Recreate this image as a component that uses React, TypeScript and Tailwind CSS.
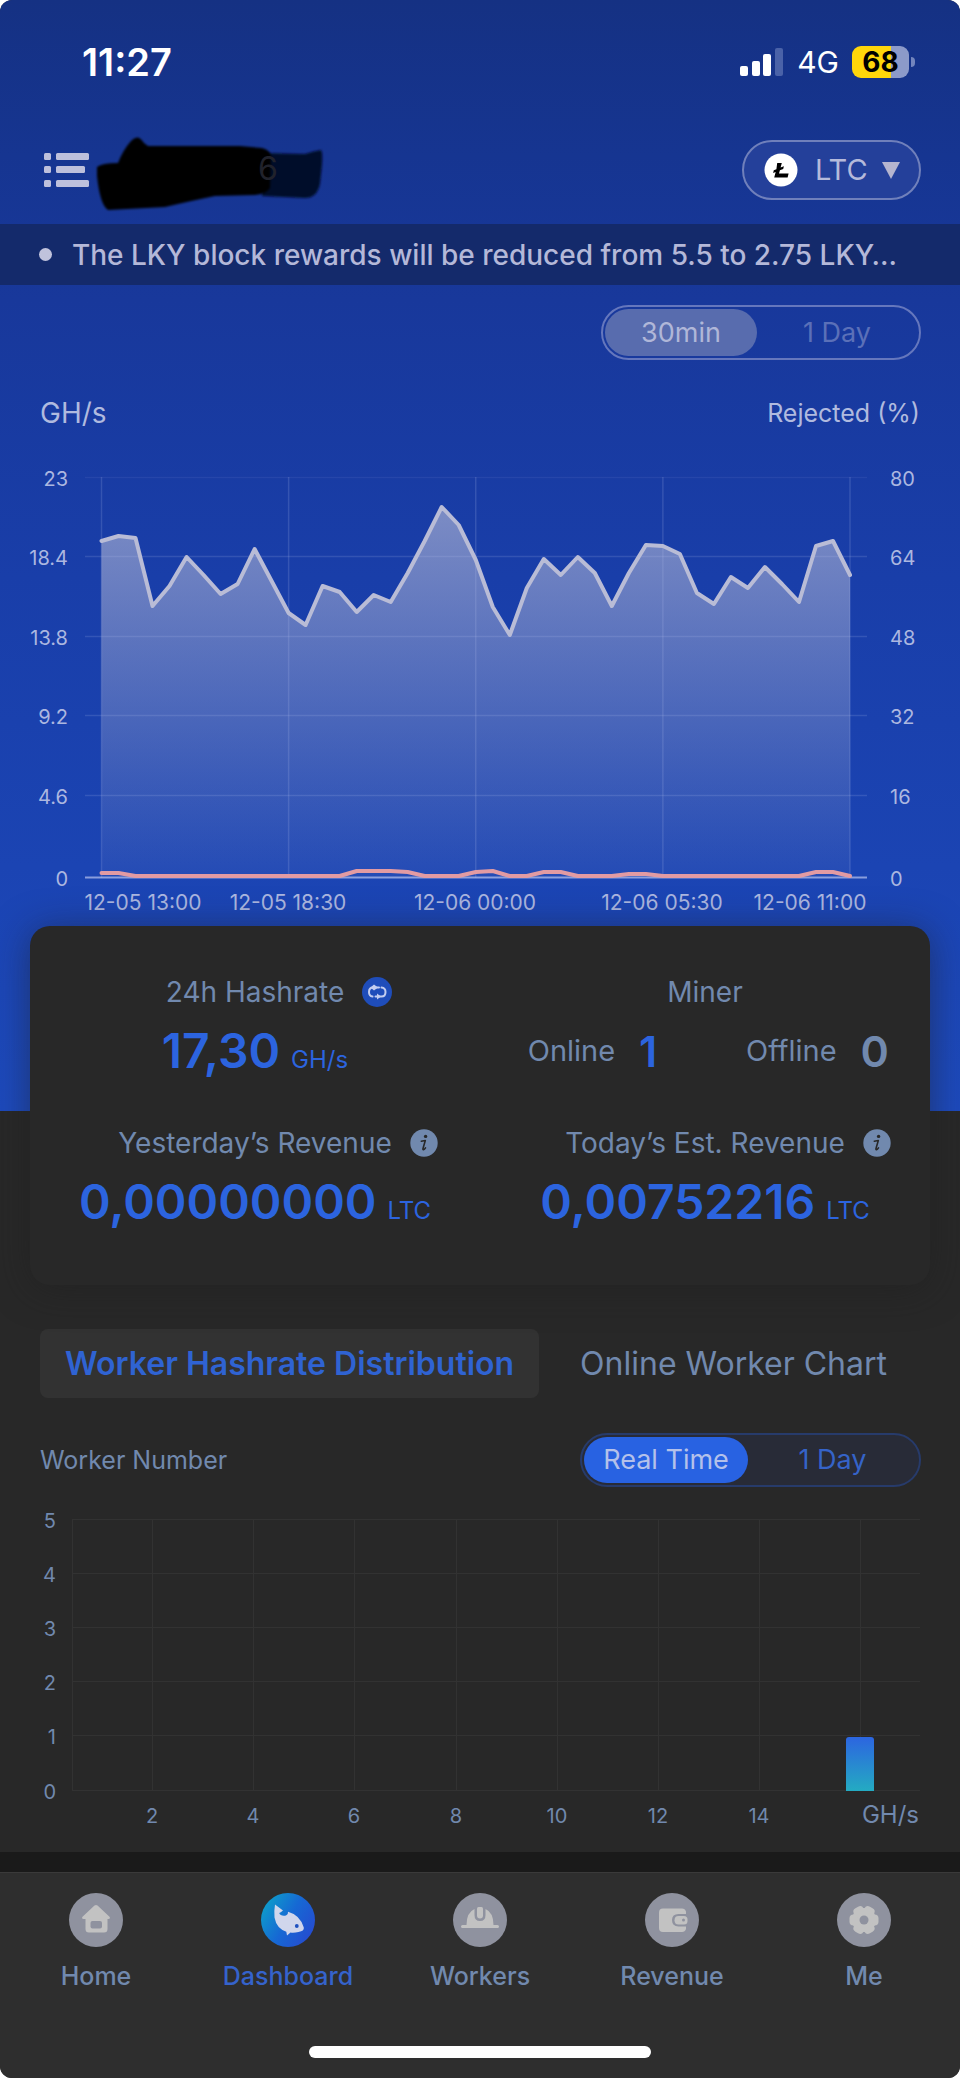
import React from "react";

const hashrate = [
  541, 536, 538, 606, 586, 557, 575, 594, 584, 549, 581, 613, 625, 586, 592, 612, 595, 602, 573, 541, 507, 525, 560, 607,
  635, 588, 559, 575, 557, 573, 606, 573, 545, 546, 554, 593, 604, 577, 588, 567, 584, 602, 546, 541, 575,
];
const rejectedBumps: Record<number, number> = {
  0: 873, 1: 873, 15: 871, 16: 871, 17: 871, 18: 872, 22: 872, 23: 871, 26: 872, 27: 872, 31: 874, 32: 874, 42: 872, 43: 872,
};
const rejected = hashrate.map((_, i) => rejectedBumps[i] ?? 876);
const STEP = 748.5 / 44;
const toPoints = (ys: number[]) => ys.map((y, i) => `${(101.5 + i * STEP).toFixed(1)},${y}`).join(" ");

function StatusBar() {
  return (
    <div className="flex h-[124px] items-center justify-between pr-[45px] pl-[82px] text-white">
      <span className="text-[38px] leading-[44px] font-semibold">11:27</span>
      <div className="flex items-center gap-[13px]">
        <svg className="h-[30px] w-[44px]" viewBox="0 0 44 30" aria-hidden="true">
          <rect x="0" y="19" width="8" height="10" rx="2" fill="#fff" />
          <rect x="12" y="14" width="8" height="15" rx="2" fill="#fff" />
          <rect x="23" y="7" width="8" height="22" rx="2" fill="#fff" />
          <rect x="35" y="1" width="8" height="28" rx="2" fill="#4a62a8" />
        </svg>
        <span className="text-[30px] leading-[36px]">4G</span>
        <div className="flex items-center gap-[2px]">
          <div className="flex h-[32px] w-[57px] items-center justify-center rounded-[9px] bg-[linear-gradient(90deg,#ffd60a_68%,#8c9ac9_68%)] text-[28px] leading-[32px] font-bold text-black">
            68
          </div>
          <div className="h-[10px] w-[4px] rounded-r-full bg-[#7385bd]" />
        </div>
      </div>
    </div>
  );
}

function Header() {
  return (
    <header className="mt-[6px] flex h-[80px] items-center justify-between pr-[39px] pl-[44px]">
      <div className="flex items-center gap-[4px]">
        <button aria-label="Menu">
          <svg className="h-[34px] w-[46px]" viewBox="0 0 46 34" fill="#bdc0dc" aria-hidden="true">
            <rect x="0" y="0" width="7" height="7" rx="1.5" />
            <rect x="12" y="0" width="33" height="7" rx="1.5" />
            <rect x="0" y="13" width="7" height="7" rx="1.5" />
            <rect x="12" y="13" width="29" height="7" rx="1.5" />
            <rect x="0" y="27" width="7" height="7" rx="1.5" />
            <rect x="12" y="27" width="33" height="7" rx="1.5" />
          </svg>
        </button>
        <div className="relative h-[80px] w-[232px]">
          <svg className="h-[80px] w-[232px] overflow-visible" viewBox="94 130 232 80" aria-hidden="true">
            <defs>
              <filter id="soft" x="-10%" y="-20%" width="120%" height="140%">
                <feGaussianBlur stdDeviation="1.3" />
              </filter>
            </defs>
            <path d="M262 153L305 154Q314 151 321 150Q323 152 322 165L320 184Q317 198 305 198L262 196Z" fill="#030d2b" filter="url(#soft)" />
            <path d="M97 167Q102 163 118 163Q123 150 131 141Q138 133 144 143L148 146L240 146L262 148Q270 150 271 156L270 188Q266 194 255 195L215 196Q195 200 165 207L108 210Q100 205 97 176Z" fill="#000" filter="url(#soft)" />
          </svg>
          <span className="absolute top-[21px] left-[164px] text-[32px] leading-[36px] text-[#20222b]">6</span>
        </div>
      </div>
      <button className="flex h-[60px] w-[179px] items-center rounded-full border-2 border-[#7080bb] bg-[#24409a] pl-[20px] text-[29px] leading-[36px] text-[#b5badb]">
        <svg className="h-[34px] w-[34px]" viewBox="0 0 34 34" aria-hidden="true">
          <circle cx="17" cy="17" r="16.5" fill="#fff" />
          <path d="M13.2 10h4.6l-1.2 4.6 3.3-1.3-.7 2.6-3.3 1.3-.9 3.3h9.6l-1 4.1H10.200l1.500-5.700-2.600 1 .7-2.600 2.600-1z" fill="#000" />
        </svg>
        <span className="ml-[17px]">LTC</span>
        <svg className="ml-[14px] h-[18px] w-[18px]" viewBox="0 0 18 18" aria-hidden="true">
          <path d="M0 1h18L9 18z" fill="#b5b5cf" />
        </svg>
      </button>
    </header>
  );
}

const xTicks: [number, string][] = [
  [143, "12-05 13:00"],
  [288, "12-05 18:30"],
  [475, "12-06 00:00"],
  [662, "12-06 05:30"],
  [810, "12-06 11:00"],
];
const yRows: [number, string, string][] = [
  [478, "23", "80"],
  [557, "18.4", "64"],
  [637, "13.8", "48"],
  [716, "9.2", "32"],
  [796, "4.6", "16"],
  [878, "0", "0"],
];

function HashrateChart() {
  return (
    <svg className="mt-[20px] block h-auto w-full" viewBox="0 450 960 476" role="img" aria-label="Hashrate and rejected rate">
      <defs>
        <linearGradient id="area" gradientUnits="userSpaceOnUse" x1="0" y1="507" x2="0" y2="878">
          <stop offset="0" stopColor="#b4b9d6" stopOpacity="0.64" />
          <stop offset="1" stopColor="#b4b9d6" stopOpacity="0.06" />
        </linearGradient>
      </defs>
      <polygon points={`101.5,878 ${toPoints(hashrate)} 850,878`} fill="url(#area)" />
      {yRows.map(([y], i) => (
        <line key={y} x1="85" x2="867" y1={y - 0.5} y2={y - 0.5} stroke="#b9c3ee" strokeOpacity={i === 0 ? 0.08 : i === 5 ? 0.7 : 0.17} strokeWidth={i === 5 ? 2 : 1.5} />
      ))}
      {[0, 11, 22, 33, 44].map((i) => (
        <line key={i} x1={101.5 + i * STEP} x2={101.5 + i * STEP} y1="477" y2="878" stroke="#b9c3ee" strokeOpacity="0.18" strokeWidth="1.5" />
      ))}
      <polyline points={toPoints(hashrate)} fill="none" stroke="#b9bcd6" strokeWidth="4" strokeLinejoin="round" strokeLinecap="round" />
      <polyline points={toPoints(rejected)} fill="none" stroke="#e29ba3" strokeWidth="4" strokeLinejoin="round" strokeLinecap="round" />
      <g fill="#acb7e0" fontSize="20">
        {yRows.map(([y, left, right]) => (
          <React.Fragment key={y}>
            <text x="68" y={y + 8} textAnchor="end">{left}</text>
            <text x="890" y={y + 8}>{right}</text>
          </React.Fragment>
        ))}
        {xTicks.map(([x, label]) => (
          <text key={label} x={x} y="910" textAnchor="middle" fontSize="21">{label}</text>
        ))}
      </g>
    </svg>
  );
}

function InfoIcon() {
  return (
    <svg className="h-[28px] w-[28px]" viewBox="0 0 28 28" aria-hidden="true">
      <circle cx="14" cy="14" r="13.700" fill="#7189ae" />
      <circle cx="15.600" cy="7.400" r="1.700" fill="#282828" />
      <path d="M11.300 12.200l4-.7-2.300 8q-.3 1.400.5 1.200 1-.3 2-1.800" fill="none" stroke="#282828" strokeWidth="1.600" strokeLinecap="round" strokeLinejoin="round" />
    </svg>
  );
}

function SyncIcon() {
  return (
    <svg className="h-[30px] w-[30px]" viewBox="0 0 30 30" aria-hidden="true">
      <circle cx="15" cy="15" r="15" fill="#1f4dba" />
      <g fill="none" stroke="#c3cdf0" strokeWidth="2" strokeLinecap="round" strokeLinejoin="round">
        <path d="M10.500 19.500Q7 19 7 15Q7 10.500 11 10.500H12.500" />
        <path d="M19.500 10.500Q23.500 11 23.500 15Q23.500 19.500 19.500 19.500H18" />
        <path d="M13 10.500H17M13.500 19.500H17" />
      </g>
      <path d="M12 7.500v6l-3.500-3zM12 7.500l4 3-4 3zM15 16.500v6l4-3z" fill="#c3cdf0" />
    </svg>
  );
}

function StatLabel({ children, icon }: { children: React.ReactNode; icon?: React.ReactNode }) {
  return (
    <div className="grid h-[32px] grid-cols-[1fr_auto_1fr] items-center gap-x-[18px] text-[28px] leading-[32px] text-[#7189ae]">
      <span className="col-start-2 whitespace-nowrap">{children}</span>
      {icon}
    </div>
  );
}

function StatValue({ value, unit }: { value: string; unit: string }) {
  return (
    <div className="mt-[15px] flex h-[56px] items-baseline justify-center gap-[11px] leading-[56px] text-[#2c64df]">
      <span className="text-[48px] font-semibold">{value}</span>
      <span className="text-[24px]">{unit}</span>
    </div>
  );
}

function Summary() {
  return (
    <section className="relative mx-[30px] -mt-[185px] grid grid-cols-2 gap-y-[48px] rounded-[20px] bg-[#282828] pt-[50px] pb-[55px] shadow-[0_4px_36px_rgba(30,30,30,0.5)]">
      <div>
        <StatLabel icon={<SyncIcon />}>24h Hashrate</StatLabel>
        <StatValue value="17,30" unit="GH/s" />
      </div>
      <div>
        <StatLabel>Miner</StatLabel>
        <div className="mt-[15px] grid h-[56px] grid-cols-2 text-[29px] leading-[56px] text-[#7189ae]">
          <div className="flex items-center justify-center gap-[24px]">
            Online <span className="text-[43px] font-semibold text-[#2c64df]">1</span>
          </div>
          <div className="flex items-center justify-center gap-[24px]">
            Offline <span className="text-[43px] font-semibold">0</span>
          </div>
        </div>
      </div>
      <div>
        <StatLabel icon={<InfoIcon />}>Yesterday’s Revenue</StatLabel>
        <StatValue value="0,00000000" unit="LTC" />
      </div>
      <div>
        <StatLabel icon={<InfoIcon />}>Today’s Est. Revenue</StatLabel>
        <StatValue value="0,00752216" unit="LTC" />
      </div>
    </section>
  );
}

function WorkerChart() {
  const rows = [1520, 1574, 1628, 1682, 1736, 1791];
  const cols = [72, 152, 253, 354, 456, 557, 658, 759, 860];
  return (
    <svg className="mt-[13px] block h-auto w-full" viewBox="0 1500 960 352" role="img" aria-label="Worker hashrate distribution">
      <defs>
        <linearGradient id="bar" x1="0" y1="0" x2="0" y2="1">
          <stop offset="0" stopColor="#2c65e0" />
          <stop offset="1" stopColor="#24abc2" />
        </linearGradient>
      </defs>
      <g stroke="#323232" strokeWidth="1">
        {rows.map((y) => <line key={y} x1="72" x2="920" y1={y - 0.5} y2={y - 0.5} />)}
        {cols.map((x) => <line key={x} x1={x + 0.5} x2={x + 0.5} y1="1519" y2="1791" />)}
      </g>
      <path d="M846 1791V1740q0-3 3-3h22q3 0 3 3V1791z" fill="url(#bar)" />
      <g fill="#7189ae" fontSize="20">
        {rows.map((y, i) => <text key={y} x="56" y={y + 8} textAnchor="end">{5 - i}</text>)}
        {cols.slice(1, 8).map((x, i) => <text key={x} x={x} y="1823" textAnchor="middle">{(i + 1) * 2}</text>)}
        <text x="919" y="1823" textAnchor="end" fontSize="24">GH/s</text>
      </g>
    </svg>
  );
}

const glyph = "#c2c2c2";
const disc = "#8f929f";

function HomeIcon() {
  return (
    <svg className="h-[54px] w-[54px]" viewBox="0 0 54 54" aria-hidden="true">
      <circle cx="27" cy="27" r="27" fill={disc} />
      <path d="M25.500 12.600q1.500-1 3 0l12 11.200q1.200 1.700-1 2.200H38.500v10q0 3.500-3.500 3.500H20q-3.500 0-3.500-3.500V26h-2q-2.200-.5-1-2.200z" fill={glyph} />
      <rect x="21.500" y="28" width="11.500" height="7.500" rx="2" fill={disc} />
    </svg>
  );
}

function FishIcon() {
  return (
    <svg className="h-[54px] w-[54px]" viewBox="0 0 54 54" aria-hidden="true">
      <defs>
        <linearGradient id="sea" x1="0" y1="0.2" x2="1" y2="0.800">
          <stop offset="0" stopColor="#0da0c9" />
          <stop offset="0.500" stopColor="#1668d4" />
          <stop offset="1" stopColor="#2749cf" />
        </linearGradient>
      </defs>
      <circle cx="27" cy="27" r="27" fill="url(#sea)" />
      <path d="M14 11.500L22 17.500Q19.500 19.500 18.200 20Q19.500 23.500 25 22.500Q27.500 21 27 18.800Q39 22 42.800 34.500Q43.500 38 37.500 39Q33 40.200 29.500 39.600L26 42.600L25.300 38.700Q15.500 35.500 13.500 24.500Q13 17 14 11.500Z" fill="#d0d6ec" />
      <circle cx="35.800" cy="33" r="1.900" fill="#1f51bf" />
    </svg>
  );
}

function HelmetIcon() {
  return (
    <svg className="h-[54px] w-[54px]" viewBox="0 0 54 54" aria-hidden="true">
      <circle cx="27" cy="27" r="27" fill={disc} />
      <path d="M9.500 32H13.500Q13.500 19.500 21.500 16V22Q21.500 28 27 28T32.500 22V16Q40.500 19.500 40.500 32H44.500Q46 32 46 33.500T44.500 35H9.500Q8 35 8 33.500T9.500 32Z" fill={glyph} />
      <path d="M24 15.500Q24 14 25.500 14h3Q30 14 30 15.500V22.500Q30 25.500 27 25.500T24 22.500Z" fill={glyph} />
    </svg>
  );
}

function WalletIcon() {
  return (
    <svg className="h-[54px] w-[54px]" viewBox="0 0 54 54" aria-hidden="true">
      <circle cx="27" cy="27" r="27" fill={disc} />
      <path d="M18 15.500H37q3 0 4 3V21H33.500q-6.500 0-6.500 6t6.500 6.500H41V36q-1 3-4 3H18q-4 0-4-4V19.500q0-4 4-4Z" fill={glyph} />
      <path d="M33.500 23H39q3.500 0 3.500 3.500v1.500q0 3.500-3.500 3.500h-5.500q-4 0-4-4.200t4-4.300Z" fill={glyph} />
      <circle cx="38.500" cy="27" r="1.500" fill={disc} />
    </svg>
  );
}

function GearIcon() {
  return (
    <svg className="h-[54px] w-[54px]" viewBox="0 0 54 54" aria-hidden="true">
      <circle cx="27" cy="27" r="27" fill={disc} />
      <g fill={glyph}>
        <circle cx="27" cy="27" r="12" />
        {[0, 60, 120, 180, 240, 300].map((a) => (
          <rect key={a} x="31" y="21.500" width="10.500" height="11" rx="4" transform={`rotate(${a} 27 27)`} />
        ))}
      </g>
      <circle cx="27" cy="27" r="4.500" fill={disc} />
    </svg>
  );
}

const navItems = [
  { label: "Home", icon: <HomeIcon /> },
  { label: "Dashboard", icon: <FishIcon />, active: true },
  { label: "Workers", icon: <HelmetIcon /> },
  { label: "Revenue", icon: <WalletIcon /> },
  { label: "Me", icon: <GearIcon /> },
];

export default function App() {
  return (
    <div className="min-h-screen bg-white font-['Inter',sans-serif]">
      <div className="flex min-h-screen flex-col overflow-hidden rounded-[12px] bg-[#282828]">
        <div className="bg-[linear-gradient(180deg,#153183_0%,#163591_14%,#18389b_27%,#193ea9_52%,#1b44b3_78%,#1d4abd_100%)] pb-[185px]">
          <StatusBar />
          <Header />
          <div className="mt-[14px] flex h-[61px] items-center gap-[20px] bg-[#142a6b] pr-[55px] pl-[39px] text-[#b4b8d8]">
            <span className="h-[13px] w-[13px] shrink-0 rounded-full bg-[#c0c2dc]" />
            <p className="text-[28px] leading-[32px] font-medium whitespace-nowrap">The LKY block rewards will be reduced from 5.5 to 2.75 LKY…</p>
          </div>
          <div className="mt-[20px] flex justify-end pr-[39px]">
            <div className="grid h-[55px] w-[320px] grid-cols-[152px_1fr] rounded-full border-2 border-[#6577bd] p-[2px] text-[27px] leading-[32px]">
              <button className="rounded-full bg-[#586cae] text-[#b0b7d8]">30min</button>
              <button className="text-[#5b70b8]">1 Day</button>
            </div>
          </div>
          <div className="mt-[36px] flex h-[34px] items-center justify-between px-[40px] text-[#b0badf]">
            <span className="text-[28px] leading-[34px]">GH/s</span>
            <span className="text-[25px] leading-[34px]">Rejected (%)</span>
          </div>
          <HashrateChart />
        </div>
        <Summary />
        <div className="mt-[44px] flex h-[69px] px-[40px] text-[32px] leading-[36px] whitespace-nowrap">
          <button className="rounded-[8px] bg-[#323232] px-[25px] font-semibold text-[#2f63d3]">Worker Hashrate Distribution</button>
          <button className="pl-[41px] text-[#7189ae]">Online Worker Chart</button>
        </div>
        <div className="mt-[35px] flex items-center justify-between pr-[39px] pl-[40px]">
          <span className="text-[25px] leading-[32px] text-[#7189ae]">Worker Number</span>
          <div className="grid h-[54px] w-[341px] grid-cols-[164px_1fr] rounded-full border-2 border-[#273b6b] bg-[#282b37] p-[2px] text-[27px] leading-[32px]">
            <button className="rounded-full bg-[#2862e2] text-[#b4c1ea]">Real Time</button>
            <button className="text-[#3563c8]">1 Day</button>
          </div>
        </div>
        <WorkerChart />
        <div className="h-[20px] bg-[#1a1a1a]" />
        <footer className="flex grow flex-col border-t border-[#3a3a3a] bg-[#2e2e2e]">
          <nav className="grid grid-cols-5 pt-[20px]">
            {navItems.map(({ label, icon, active }) => (
              <a
                key={label}
                href="#"
                className={`flex flex-col items-center gap-[13px] text-[25px] leading-[32px] font-medium ${active ? "text-[#3563cc]" : "text-[#7189ae]"}`}
              >
                {icon}
                {label}
              </a>
            ))}
          </nav>
          <div className="mx-auto mt-auto mb-[20px] h-[12px] w-[342px] rounded-full bg-white" />
        </footer>
      </div>
    </div>
  );
}
